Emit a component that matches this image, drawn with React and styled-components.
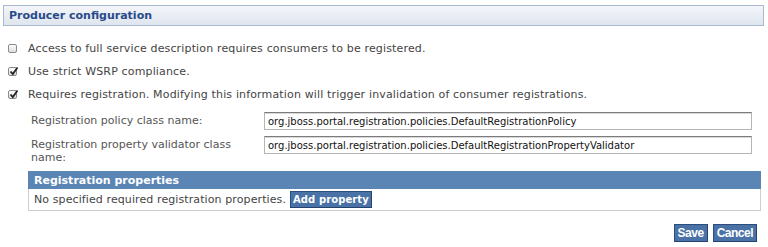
import React from "react";
import styled, { createGlobalStyle } from "styled-components";

const Global = createGlobalStyle`
  html, body { margin: 0; padding: 0; background: #ffffff; }
  body { font-family: "DejaVu Sans", Verdana, sans-serif; font-size: 11px; color: #444; }
`;

const Page = styled.div`
  width: 768px;
  height: 247px;
  box-sizing: border-box;
  padding: 5px 4px 0 3px;
`;

const TitleBar = styled.div`
  height: 19px;
  border: 1px solid #a9b9cf;
  background: linear-gradient(to bottom, #f3f5f9, #dfe5ee);
  display: flex;
  align-items: center;
  padding-left: 5px;
  font-weight: bold;
  font-size: 11px;
  color: #284a8a;
`;

const Options = styled.div`
  display: flex;
  flex-direction: column;
  gap: 10px;
  margin-top: 16px;
  padding-left: 5px;
`;

const OptionRow = styled.label`
  display: flex;
  align-items: center;
  height: 13px;
  gap: 11px;
  letter-spacing: 0.15px;
`;

const Box = styled.span`
  width: 9px;
  height: 9px;
  box-sizing: border-box;
  border: 1px solid #8a8a8a;
  border-radius: 2px;
  background: linear-gradient(to bottom, #ffffff, #dcdcdc);
  position: relative;
  flex: none;
  svg { position: absolute; left: 0; top: -2px; }
`;

const Check = ({ checked }) => (
  <Box>
    {checked && (
      <svg width="10" height="10" viewBox="0 0 10 10">
        <path d="M1.5 5.5 L3.8 8 L8.5 1.5" fill="none" stroke="#222" strokeWidth="1.8" />
      </svg>
    )}
  </Box>
);

const Fields = styled.div`
  display: grid;
  grid-template-columns: 233px 488px;
  row-gap: 6px;
  margin-top: 11px;
  padding-left: 28px;
  align-items: start;
`;

const FieldLabel = styled.div`
  color: #555;
  line-height: 13px;
  padding-top: 2px;
  width: 210px;
`;

const TextInput = styled.input`
  box-sizing: border-box;
  height: 18px;
  width: 488px;
  border: 1px solid #b5b5b5;
  border-top-color: #7c7c7c;
  box-shadow: inset 0 1px 0 #d8d8d8;
  font-family: "DejaVu Sans", Verdana, sans-serif;
  font-size: 10px;
  color: #111;
  padding: 0 3px;
  outline: none;
`;

const PropTable = styled.div`
  margin: 7px 3px 0 25px;
  border: 1px solid #cfcfcf;
  border-top: none;
`;

const PropHead = styled.div`
  height: 18px;
  background: #5a85b4;
  color: #fff;
  font-weight: bold;
  font-size: 11px;
  display: flex;
  align-items: center;
  padding-left: 6px;
  margin: 0 -1px;
`;

const PropBody = styled.div`
  height: 21px;
  display: flex;
  align-items: center;
  padding-left: 5px;
  gap: 4px;
  color: #444;
  letter-spacing: 0.1px;
`;

const BlueButton = styled.button`
  background: #4a72a6;
  border: 1px solid #2c4e7e;
  border-right-color: #23426d;
  border-bottom-color: #23426d;
  color: #fff;
  font-family: ${(p) => (p.$narrow ? '"Liberation Sans", Arial, sans-serif' : '"DejaVu Sans", Verdana, sans-serif')};
  font-weight: bold;
  font-size: ${(p) => (p.$narrow ? "12px" : "10px")};
  height: ${(p) => (p.$narrow ? "18px" : "17px")};
  padding: 0 ${(p) => (p.$narrow ? "3px" : "2px")};
  letter-spacing: ${(p) => (p.$narrow ? "-0.5px" : "0.1px")};
  line-height: 1;
  cursor: pointer;
`;

const Actions = styled.div`
  display: flex;
  justify-content: flex-end;
  gap: 5px;
  margin-top: 13px;
  padding-right: 7px;
`;

export default function App() {
  return (
    <Page>
      <Global />
      <TitleBar>Producer configuration</TitleBar>
      <Options>
        <OptionRow>
          <Check checked={false} />
          Access to full service description requires consumers to be registered.
        </OptionRow>
        <OptionRow>
          <Check checked />
          Use strict WSRP compliance.
        </OptionRow>
        <OptionRow>
          <Check checked />
          Requires registration. Modifying this information will trigger invalidation of consumer registrations.
        </OptionRow>
      </Options>
      <Fields>
        <FieldLabel>Registration policy class name:</FieldLabel>
        <TextInput defaultValue="org.jboss.portal.registration.policies.DefaultRegistrationPolicy" />
        <FieldLabel>Registration property validator class name:</FieldLabel>
        <TextInput defaultValue="org.jboss.portal.registration.policies.DefaultRegistrationPropertyValidator" />
      </Fields>
      <PropTable>
        <PropHead>Registration properties</PropHead>
        <PropBody>
          No specified required registration properties.
          <BlueButton>Add property</BlueButton>
        </PropBody>
      </PropTable>
      <Actions>
        <BlueButton $narrow>Save</BlueButton>
        <BlueButton $narrow>Cancel</BlueButton>
      </Actions>
    </Page>
  );
}
